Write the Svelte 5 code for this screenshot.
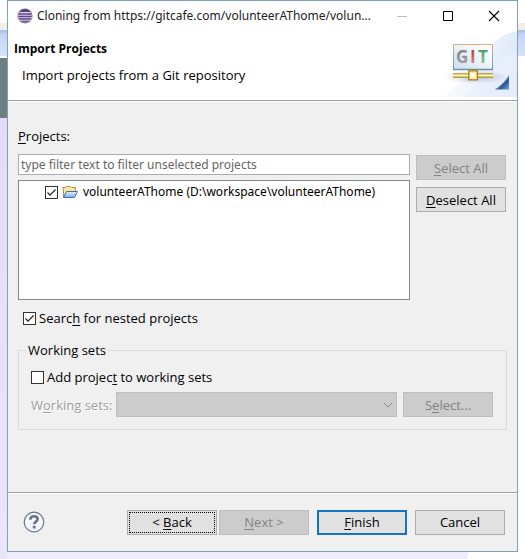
<script>
  let filter = $state('');
  let projectChecked = $state(true);
  let nested = $state(true);
  let addToSets = $state(false);
</script>

<div class="desktop">
  <main class="dialog">
    <header class="titlebar">
      <svg class="app-icon" viewBox="0 0 16 16" aria-hidden="true">
        <defs>
          <radialGradient id="orb" cx="50%" cy="45%" r="55%">
            <stop offset="0" stop-color="#6b5290" />
            <stop offset="0.65" stop-color="#56407c" />
            <stop offset="1" stop-color="#a78fb8" />
          </radialGradient>
        </defs>
        <circle cx="8" cy="8" r="7.6" fill="url(#orb)" />
        <path d="M2.2 4.6h11.6M1 7.2h14M1 9.8h14M2.4 12.3h11.2" stroke="#d9cdea" stroke-width="1.1" />
      </svg>
      <span class="caption">Cloning from https://gitcafe.com/volunteerAThome/volun...</span>
      <div class="window-buttons">
        <button class="win" disabled aria-label="Minimize">
          <svg viewBox="0 0 12 12"><path d="M1 6.5h10" stroke="#bdbdbd" /></svg>
        </button>
        <button class="win" aria-label="Maximize">
          <svg viewBox="0 0 12 12"><path d="M1.5 1.5h9v9h-9z" fill="none" stroke="#000" /></svg>
        </button>
        <button class="win" aria-label="Close">
          <svg viewBox="0 0 12 12"><path d="M1 1l10 10M11 1L1 11" stroke="#000" stroke-width="1.1" /></svg>
        </button>
      </div>
    </header>

    <section class="banner">
      <div class="banner-text">
        <h1>Import Projects</h1>
        <p>Import projects from a Git repository</p>
      </div>
      <svg class="banner-art" viewBox="0 0 75 67" aria-hidden="true">
        <defs>
          <linearGradient id="wash" x1="0" y1="0.3" x2="1" y2="0.6">
            <stop offset="0" stop-color="#fff" />
            <stop offset="0.4" stop-color="#f3f7fe" />
            <stop offset="1" stop-color="#dbe6f9" />
          </linearGradient>
          <linearGradient id="panel" x1="1" y1="0" x2="0" y2="1">
            <stop offset="0" stop-color="#fff" />
            <stop offset="0.35" stop-color="#f3f8fb" />
            <stop offset="1" stop-color="#c9dfec" />
          </linearGradient>
          <linearGradient id="frame" x1="0" y1="0" x2="0" y2="1">
            <stop offset="0" stop-color="#dfae83" />
            <stop offset="0.5" stop-color="#93a9b8" />
            <stop offset="1" stop-color="#6f8cab" />
          </linearGradient>
          <linearGradient id="pipe" x1="0" y1="0" x2="0" y2="1">
            <stop offset="0" stop-color="#a99a38" />
            <stop offset="0.5" stop-color="#fff6b8" />
            <stop offset="1" stop-color="#a08a26" />
          </linearGradient>
          <linearGradient id="corner" x1="0" y1="0" x2="1" y2="1">
            <stop offset="0.3" stop-color="#d5e2f5" />
            <stop offset="0.65" stop-color="#2a5796" />
            <stop offset="1" stop-color="#7fa5d6" />
          </linearGradient>
          <linearGradient id="gray" x1="0" y1="0" x2="0" y2="1">
            <stop offset="0" stop-color="#777" /><stop offset="1" stop-color="#aaa" />
          </linearGradient>
          <linearGradient id="red" x1="0" y1="0" x2="0" y2="1">
            <stop offset="0.2" stop-color="#a94444" /><stop offset="1" stop-color="#e19a9a" />
          </linearGradient>
          <linearGradient id="green" x1="0" y1="0" x2="0" y2="1">
            <stop offset="0.2" stop-color="#4f9e63" /><stop offset="1" stop-color="#9dd0a5" />
          </linearGradient>
          <radialGradient id="shade">
            <stop offset="0" stop-color="#8a8aa8" stop-opacity="0.5" />
            <stop offset="1" stop-color="#a0a0c0" stop-opacity="0" />
          </radialGradient>
        </defs>
        <path d="M75 1C60 4 53 10 44 22C30 42 16 56 0 67H75Z" fill="url(#wash)" />
        <path d="M75 23C61 26 54 34 46 45C38 56 30 62 22 67H75Z" fill="#e9effc" opacity="0.7" />
        <ellipse cx="34" cy="47" rx="34" ry="7" fill="url(#shade)" />
        <path d="M11.5 14.5h39v25h-39z" fill="url(#panel)" stroke="url(#frame)" />
        <path d="M11 39.5h40" stroke="#6f8cab" stroke-width="1.4" />
        <g font-family="'Open Sans', 'Noto Sans', sans-serif" font-size="17" font-weight="700">
          <text x="14" y="33" fill="url(#gray)">G</text>
          <text x="28" y="33" fill="url(#red)">I</text>
          <text x="36" y="33" fill="url(#green)">T</text>
        </g>
        <path d="M11 43h40v5H11z" fill="url(#pipe)" />
        <path d="M28 39v3M31 39v3M34 39v3" stroke="#a58c25" />
        <path d="M26.8 40.8h8.6v9h-8.6z" fill="#fbeeb0" stroke="#a27c20" stroke-width="1.3" />
        <path d="M29 43h4v4h-4z" fill="#fffbe2" />
        <path d="M67 45v14.500H52.500Q62 54 67 45z" fill="url(#corner)" />
      </svg>
    </section>

    <section class="content">
      <label class="list-label" for="filter"><u>P</u>rojects:</label>
      <div class="projects">
        <div class="list-column">
          <input id="filter" class="filter" type="text" placeholder="type filter text to filter unselected projects" bind:value={filter} />
          <div class="tree">
            <label class="check">
              <input type="checkbox" bind:checked={projectChecked} />
              <svg class="folder" viewBox="0 0 16 14" aria-hidden="true">
                <defs>
                  <linearGradient id="flap" x1="0" y1="0" x2="0" y2="1">
                    <stop offset="0" stop-color="#e6f1fd" /><stop offset="1" stop-color="#7fb0ea" />
                  </linearGradient>
                </defs>
                <path d="M1.500 12V4.500L0.500 2.500H3L4.500 1.500H8.500L9.500 2.500H13.500V6" fill="#fbe6a6" stroke="#b98f49" />
                <path d="M1.500 12.500L4.500 6.500H15.500L12.500 12.500Z" fill="url(#flap)" stroke="#3f6fb5" />
              </svg>
              <span>volunteerAThome (D:\workspace\volunteerAThome)</span>
            </label>
          </div>
        </div>
        <div class="side">
          <button class="btn" disabled><u>S</u>elect All</button>
          <button class="btn"><u>D</u>eselect All</button>
        </div>
      </div>

      <label class="check nested">
        <input type="checkbox" bind:checked={nested} />
        <span>Searc<u>h</u> for nested projects</span>
      </label>

      <fieldset>
        <legend>Working sets</legend>
        <label class="check">
          <input type="checkbox" bind:checked={addToSets} />
          <span>Add projec<u>t</u> to working sets</span>
        </label>
        <div class="set-row">
          <label class="dim" for="sets">W<u>o</u>rking sets:</label>
          <div class="combo">
            <select id="sets" disabled><option></option></select>
            <svg viewBox="0 0 10 6" aria-hidden="true"><path d="M1 1l4 4l4-4" fill="none" stroke="#8c8c8c" /></svg>
          </div>
          <button class="btn" disabled>S<u>e</u>lect...</button>
        </div>
      </fieldset>
    </section>

    <footer>
      <button class="help" aria-label="Help">
        <svg viewBox="0 0 22 22">
          <circle cx="11" cy="11" r="9.800" fill="#f6f7f9" stroke="#66758f" stroke-width="1.200" />
          <path d="M7.300 8.700C7.300 6.200 8.900 5.200 11 5.200C13.200 5.200 14.600 6.400 14.600 8.200C14.600 10.600 11.200 10.600 11.200 13.200" fill="none" stroke="#66758f" stroke-width="2.600" />
          <path d="M9.800 14.800h2.800v2.700h-2.800z" fill="#66758f" />
        </svg>
      </button>
      <div class="nav">
        <div class="pair">
          <button class="btn focused">&lt; <u>B</u>ack</button>
          <button class="btn" disabled><u>N</u>ext &gt;</button>
        </div>
        <button class="btn primary"><u>F</u>inish</button>
        <button class="btn">Cancel</button>
      </div>
    </footer>
  </main>
</div>

<style>
  :global(body) {
    margin: 0;
  }

  .desktop {
    box-sizing: border-box;
    min-height: 100vh;
    display: flex;
    padding: 0 7px 7px;
    font: 13px/18px 'Open Sans', 'Noto Sans', sans-serif;
    color: #000;
    background:
      linear-gradient(#f3efe6, #f3efe6) 0 23px / 100% 7px no-repeat,
      linear-gradient(#a9bfe0, #c4d6f4 20%, #d6e2fa) 0 30px / 100% 26px no-repeat,
      linear-gradient(#6f8085, #6f8085) 0 58px / 7px 60px no-repeat,
      linear-gradient(#e3dcf8, #ece8fb) 0 118px / 7px 100% no-repeat,
      linear-gradient(100deg, #eeebfc 89%, #fff 89%) 0 100% / 100% 8px no-repeat,
      #fff;
  }

  .dialog {
    flex: 1;
    min-width: 0;
    display: flex;
    flex-direction: column;
    border: 1px solid #7ba3b9;
    background: #f0f0f0;
  }

  .titlebar {
    display: flex;
    align-items: center;
    height: 29px;
    padding-left: 9px;
    background: #fff;
  }

  .app-icon {
    width: 16px;
    height: 16px;
    flex: none;
  }

  .caption,
  .filter,
  .tree {
    font: 12px/18px 'Noto Sans', 'Open Sans', sans-serif;
  }

  .caption {
    flex: 1;
    min-width: 0;
    margin-left: 4px;
    white-space: nowrap;
    color: #222;
  }

  .window-buttons {
    display: flex;
  }

  .win {
    display: grid;
    place-items: center;
    width: 46px;
    height: 29px;
    padding: 0;
    border: 0;
    background: none;
  }

  .win svg {
    width: 12px;
    height: 12px;
  }

  .banner {
    display: flex;
    justify-content: space-between;
    height: 70px;
    background: #fff;
    border-bottom: 1px solid #a0a0a0;
  }

  .banner-text {
    padding: 10px 0 0 6px;
  }

  h1 {
    margin: 0;
    font-size: 12px;
    line-height: 18px;
  }

  p {
    margin: 8px 0 0 8px;
  }

  .banner-art {
    width: 75px;
    height: 67px;
  }

  .content {
    flex: 1;
    display: flex;
    flex-direction: column;
    padding: 25px 10px 0;
    border-top: 1px solid #fff;
  }

  .list-label {
    align-self: flex-start;
  }

  .projects {
    display: flex;
    gap: 6px;
    margin-top: 9px;
    padding-right: 1px;
  }

  .list-column {
    flex: 1;
    min-width: 0;
    display: flex;
    flex-direction: column;
    gap: 5px;
  }

  .filter {
    box-sizing: border-box;
    width: 100%;
    height: 21px;
    padding: 0 2px;
    border: 1px solid #abadb3;
    background: #fff;
  }

  .filter::placeholder {
    color: #666;
  }

  .tree {
    box-sizing: border-box;
    height: 120px;
    padding: 2px 0 0 26px;
    border: 1px solid #828790;
    background: #fff;
  }

  .folder {
    width: 16px;
    height: 14px;
    margin: 0 2px 0 1px;
  }

  .side {
    display: flex;
    flex-direction: column;
    gap: 7px;
    padding-top: 1px;
  }

  .check {
    display: flex;
    align-items: center;
    gap: 3px;
    white-space: nowrap;
  }

  .check input {
    appearance: none;
    box-sizing: border-box;
    flex: none;
    width: 13px;
    height: 13px;
    margin: 0;
    border: 1px solid #333;
    background: #fff;
  }

  .check input:checked {
    background: #fff url("data:image/svg+xml,%3Csvg xmlns='http://www.w3.org/2000/svg' viewBox='0 0 11 11'%3E%3Cpath d='M1.500 5.500L4 8.200L9.500 2.500' fill='none' stroke='%23222' stroke-width='1.200'/%3E%3C/svg%3E");
  }

  .nested {
    align-self: flex-start;
    margin: 9px 0 0 5px;
  }

  fieldset {
    min-width: 0;
    margin: 14px 0 0;
    padding: 9px 13px 12px 12px;
    border: 1px solid #dcdcdc;
  }

  legend {
    margin-left: -5px;
    padding: 0 2px;
  }

  .set-row {
    display: flex;
    align-items: center;
    gap: 6px;
    margin-top: 6px;
  }

  .dim {
    width: 79px;
    color: #9d9d9d;
    text-shadow: 1px 1px #fff;
    white-space: nowrap;
  }

  .combo {
    flex: 1;
    display: grid;
    align-items: center;
    justify-items: end;
  }

  .combo > * {
    grid-area: 1 / 1;
  }

  .combo svg {
    z-index: 1;
    width: 10px;
    height: 6px;
    margin-right: 4px;
    pointer-events: none;
  }

  select {
    appearance: none;
    box-sizing: border-box;
    width: 100%;
    height: 25px;
    border: 1px solid #bfbfbf;
    border-radius: 0;
    background: #ccc;
    opacity: 1;
  }

  .btn {
    box-sizing: border-box;
    width: 90px;
    height: 25px;
    padding: 0;
    border: 1px solid #adadad;
    background: #e1e1e1;
    color: #000;
    font: inherit;
  }

  .btn:disabled {
    border-color: #bfbfbf;
    background: #ccc;
    color: #838383;
  }

  .btn.primary {
    border: 2px solid #1673c0;
  }

  .focused {
    outline: 1px dotted #000;
    outline-offset: -3px;
  }

  u {
    text-underline-offset: 2px;
  }

  footer {
    display: flex;
    align-items: center;
    justify-content: space-between;
    height: 58px;
    padding: 0 12px 0 15px;
    border-top: 1px solid #a0a0a0;
    box-shadow: inset 0 1px #fff;
  }

  .help {
    width: 22px;
    height: 22px;
    padding: 0;
    border: 0;
    background: none;
  }

  .help svg {
    display: block;
  }

  .nav {
    display: flex;
    gap: 8px;
  }

  .pair {
    display: flex;
    gap: 2px;
  }
</style>
